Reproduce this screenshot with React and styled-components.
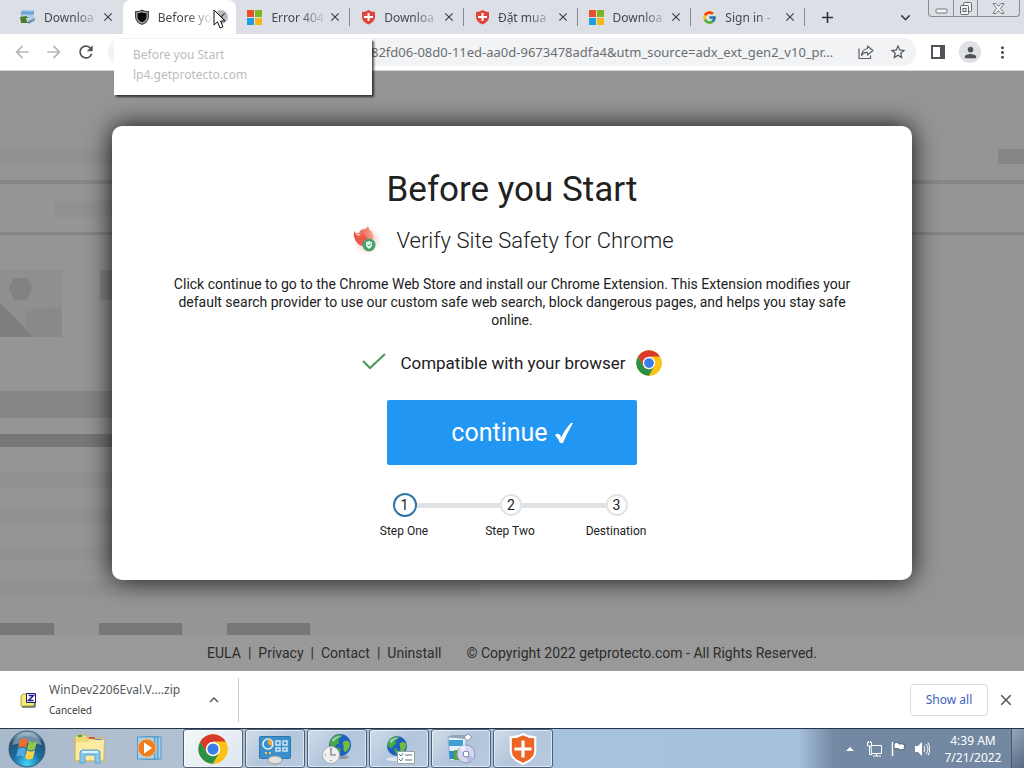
import React from "react";
import styled, { createGlobalStyle, css } from "styled-components";
import {
  MdArrowBack,
  MdArrowForward,
  MdRefresh,
  MdStarBorder,
  MdMoreVert,
  MdPerson,
  MdClose,
  MdAdd,
  MdKeyboardArrowDown,
  MdKeyboardArrowUp,
} from "react-icons/md";
import { FcGoogle } from "react-icons/fc";

const uiFont = `"Noto Sans", "Open Sans", sans-serif`;
const pageFont = `Roboto, "Liberation Sans", sans-serif`;

const Global = createGlobalStyle`
  *, *::before, *::after { box-sizing: border-box; }
  body { margin: 0; font-family: ${uiFont}; }
  button, input { font: inherit; color: inherit; margin: 0; }
  p, h1, h2, ol { margin: 0; padding: 0; }
  svg { display: block; flex: none; }
`;

const Desktop = styled.div`
  display: flex;
  flex-direction: column;
  min-height: 100vh;
  position: relative;
`;

const PlainButton = styled.button`
  display: flex;
  align-items: center;
  justify-content: center;
  padding: 0;
  border: 0;
  background: none;
`;

/* Browser tabs */

const TabStrip = styled.header`
  display: flex;
  align-items: flex-start;
  height: 34px;
  padding-left: 9px;
  background: #dcdfe5;
`;

const Tabs = styled.div`
  display: flex;
  flex: 0 1 796px;
  min-width: 0;
`;

const Tab = styled.div`
  display: flex;
  flex: 1 1 0;
  align-items: center;
  min-width: 0;
  height: 34px;
  padding: 0 8px 0 11px;
  font-size: 12px;
  color: #45494d;
  background: ${(p) => (p.$active ? "#fff" : "transparent")};
  border-radius: 8px 8px 0 0;
  ${(p) =>
    p.$divider &&
    css`
      background: linear-gradient(#85898e, #85898e) right 8px / 1px 18px no-repeat;
    `}
`;

const TabTitle = styled.span`
  flex: 1;
  min-width: 0;
  margin-left: 8px;
  overflow: hidden;
  white-space: nowrap;
  mask-image: linear-gradient(90deg, #000 30px, rgba(0, 0, 0, 0.15) 52px);
`;

const TabClose = styled(PlainButton)`
  width: 14px;
  height: 14px;
  border-radius: 50%;
  color: #3c4043;
  background: ${(p) => (p.$hover ? "#b8bbbf" : "none")};
`;

const NewTab = styled(PlainButton)`
  width: 28px;
  height: 34px;
  margin-left: 8px;
  color: #2f3235;
`;

const WindowTools = styled.div`
  display: flex;
  align-items: flex-start;
  margin-left: auto;
  padding-right: 4px;
`;

const TabSearch = styled(PlainButton)`
  width: 28px;
  height: 34px;
  margin-right: 9px;
  color: #3c4043;
`;

const WindowButtons = styled.div`
  display: flex;
  height: 17px;
  border: 1px solid #888c92;
  border-top: 0;
  border-radius: 0 0 4px 4px;
`;

const WindowButton = styled(PlainButton)`
  width: ${(p) => (p.$wide ? 42 : 24)}px;
  & + & {
    border-left: 1px solid #888c92;
  }
`;

/* Address row */

const Toolbar = styled.nav`
  display: flex;
  align-items: center;
  height: 37px;
  padding: 0 12px 0 8px;
  background: #fff;
  border-bottom: 1px solid #d5d5d5;
`;

const ToolButton = styled(PlainButton)`
  width: 28px;
  height: 28px;
  margin-right: 4px;
  color: ${(p) => (p.$faded ? "#b4b6b8" : "#505357")};
`;

const Omnibox = styled.div`
  display: flex;
  flex: 1;
  align-items: center;
  height: 28px;
  margin: 0 8px 0 4px;
  border-radius: 14px;
  background: #f2f3f4;
`;

const Address = styled.input`
  flex: 1;
  min-width: 0;
  height: 28px;
  padding: 0 0 0 263px;
  border: 0;
  outline: 0;
  background: none;
  font-size: 13px;
  color: #6b6e72;
`;

const Avatar = styled(PlainButton)`
  width: 22px;
  height: 22px;
  margin: 0 12px 0 3px;
  border-radius: 50%;
  background: #dfe1e5;
  color: #505357;
`;

const TabTooltip = styled.div`
  position: absolute;
  left: 114px;
  top: 39px;
  width: 258px;
  height: 56px;
  padding: 6px 19px;
  background: #fff;
  box-shadow: 2px 2px 2px rgba(0, 0, 0, 0.65);
  font-size: 12px;
  line-height: 20px;
  color: #bcbcbc;
`;

const Pointer = styled.svg`
  position: absolute;
  left: 213px;
  top: 9px;
`;

/* Web page */

const Page = styled.div`
  position: relative;
  display: flex;
  flex: 1;
  flex-direction: column;
  align-items: center;
  padding-top: 55px;
  background: #959595;
  font-family: ${pageFont};
  overflow: hidden;
`;

const Backdrop = styled.div`
  position: absolute;
  inset: 0;
  display: flex;
  flex-direction: column;
  align-items: flex-start;
`;

const Strip = styled.div`
  display: flex;
  flex: none;
  justify-content: ${(p) => (p.$split ? "space-between" : "flex-start")};
  width: ${(p) => p.$width || "100%"};
  height: ${(p) => p.$height}px;
  margin-top: ${(p) => p.$gap}px;
  margin-left: ${(p) => p.$indent || 0}px;
  background: ${(p) => p.$color || "none"};
`;

const Block = styled.div`
  width: ${(p) => p.$width}px;
  height: ${(p) => p.$height}px;
  margin-right: ${(p) => p.$after || 0}px;
  background: ${(p) => p.$color};
`;

const Card = styled.main`
  position: relative;
  display: flex;
  flex-direction: column;
  align-items: center;
  width: calc(100% - 224px);
  max-width: 800px;
  padding: 42px 56px 41px;
  border-radius: 10px;
  background: #fff;
  box-shadow: 0 0 26px rgba(0, 0, 0, 0.9);
  color: #212121;
  text-align: center;
`;

const Title = styled.h1`
  font-size: 35px;
  font-weight: 400;
  line-height: 44px;
`;

const SubtitleRow = styled.div`
  display: flex;
  align-items: center;
  gap: 12px;
  height: 36px;
  margin-top: 11px;
`;

const Subtitle = styled.h2`
  font-size: 22px;
  font-weight: 300;
  line-height: 36px;
`;

const Description = styled.p`
  margin-top: 16px;
  font-size: 14px;
  line-height: 18px;
`;

const Compatible = styled.div`
  display: flex;
  align-items: center;
  height: 28px;
  margin-top: 20px;
  font-size: 17px;
`;

const CompatibleText = styled.span`
  margin: 0 10px 0 14px;
`;

const Continue = styled.button`
  display: flex;
  align-items: center;
  justify-content: center;
  gap: 7px;
  width: 250px;
  height: 65px;
  margin-top: 23px;
  border: 0;
  border-radius: 2px;
  background: #2196f3;
  color: #fff;
  font-size: 25px;
`;

const Track = styled.div`
  display: flex;
  align-items: center;
  width: 235px;
  height: 24px;
  margin-top: 28px;
  margin-right: 4px;
`;

const StepDot = styled.span`
  display: flex;
  flex: none;
  align-items: center;
  justify-content: center;
  width: ${(p) => (p.$current ? 24 : 22)}px;
  height: ${(p) => (p.$current ? 24 : 22)}px;
  border: 2px solid ${(p) => (p.$current ? "#2f75a8" : "#e3e3e3")};
  border-radius: 50%;
  font-size: 14px;
`;

const StepLine = styled.span`
  flex: 1;
  height: 5px;
  background: #e0e2e3;
`;

const StepLabels = styled.ol`
  display: grid;
  grid-template-columns: repeat(3, 1fr);
  width: 318px;
  margin-top: 6px;
  margin-right: 4px;
  list-style: none;
  font-size: 12px;
  line-height: 16px;
`;

const Footer = styled.footer`
  position: relative;
  display: flex;
  align-items: center;
  justify-content: center;
  width: 100%;
  height: 36px;
  margin-top: auto;
  background: #999;
  color: #2c2c2c;
  font-size: 14px;
`;

const FooterLink = styled.a`
  color: inherit;
  text-decoration: none;
  & + &::before {
    content: "|";
    margin: 0 7px;
  }
`;

const Copyright = styled.span`
  margin-left: 25px;
`;

/* Download shelf */

const Shelf = styled.section`
  display: flex;
  align-items: center;
  height: 57px;
  padding: 0 10px 0 20px;
  background: #fff;
`;

const FileInfo = styled.div`
  width: 156px;
  margin-left: 13px;
  font-size: 12px;
  line-height: 20px;
  color: #54575b;
  white-space: nowrap;
`;

const FileState = styled.div`
  font-size: 10px;
  color: #3c4043;
`;

const ShelfDivider = styled.div`
  width: 1px;
  height: 44px;
  margin-left: 15px;
  background: #c9cbce;
`;

const ShowAll = styled.button`
  width: 78px;
  height: 32px;
  margin-left: auto;
  padding: 0;
  border: 1px solid #d9dbdf;
  border-radius: 4px;
  background: #fff;
  color: #3c62bd;
  font-size: 12px;
`;

const ShelfClose = styled(PlainButton)`
  width: 16px;
  height: 28px;
  margin-left: 10px;
  color: #505357;
`;

/* Taskbar */

const Taskbar = styled.footer`
  display: flex;
  align-items: stretch;
  height: 40px;
  border-top: 1px solid #253348;
  background: linear-gradient(90deg, #a9b9cc, #b2c0d3 180px, #a7c2df 553px, #a5c1de calc(100% - 226px), #7388a2 calc(100% - 190px), #7287a1);
`;

const StartButton = styled(PlainButton)`
  width: 54px;
`;

const Pinned = styled(PlainButton)`
  width: 60px;
  padding-left: 12px;
`;

const OpenApps = styled.div`
  display: flex;
  gap: 2px;
  margin-left: 9px;
`;

const AppButton = styled(PlainButton)`
  width: 60px;
  border: 1px solid #4e6075;
  border-radius: 3px;
  background: ${(p) =>
    p.$active
      ? "linear-gradient(135deg, #f4f7fa, #dce5f0)"
      : "linear-gradient(135deg, #d2dce8, #b1c5dc 50%, #b8cbe0)"};
  box-shadow: inset 0 0 0 1px rgba(255, 255, 255, 0.55);
`;

const Tray = styled.div`
  display: flex;
  align-items: center;
  gap: 8px;
  margin-left: auto;
  color: #fff;
`;

const TrayExpander = styled(PlainButton)`
  margin-right: 4px;
`;

const Clock = styled.time`
  width: 60px;
  margin-left: 5px;
  font-size: 12px;
  line-height: 17px;
  text-align: center;
`;

const ShowDesktop = styled(PlainButton)`
  align-self: stretch;
  width: 13px;
  border-left: 1px solid #43566d;
  background: linear-gradient(135deg, #96a6b8, #566b83);
`;

/* Icons */

const LandscapeIcon = () => (
  <svg width="16" height="16" viewBox="0 0 16 16">
    <path d="M1 1h13v10H1z" fill="#a9cdea" />
    <path d="M1 3c3-2 8 1 13-1v3C9 7 5 4 1 6z" fill="#6fa3d6" />
    <path d="M0 8l6-1 4 3v4H1z" fill="#4d7d2a" />
    <path d="M6 9h9v4H7z" fill="#c1d6e3" />
    <path d="M8 12l7-3v2l-6 4z" fill="#7194ae" />
  </svg>
);

const ShieldIcon = () => (
  <svg width="16" height="16" viewBox="0 0 16 16">
    <path d="M1 2q4 .3 7-1.500q3 1.800 7 1.500v6q0 5-7 8q-7-3-7-8z" fill="#444" />
    <path d="M2.200 3.200q3 0 5.800-1.300q2.800 1.300 5.800 1.300v5q0 4-5.800 6.500q-5.800-2.500-5.800-6.500z" fill="#aaa" />
    <path d="M3.500 4.300q2.500 0 4.500-1q2 1 4.500 1v4q0 3-4.500 5q-4.500-2-4.500-5z" fill="#050505" />
  </svg>
);

const MicrosoftIcon = () => (
  <svg width="16" height="16" viewBox="0 0 16 16">
    <path d="M0 1h7v7H0z" fill="#e8502a" />
    <path d="M8 1h7v7H8z" fill="#7cb51f" />
    <path d="M0 9h7v7H0z" fill="#1b9fe3" />
    <path d="M8 9h7v7H8z" fill="#f5b71b" />
  </svg>
);

const GuardIcon = ({ size, color }) => (
  <svg width={size} height={size} viewBox="0 0 30 30">
    <path d="M15 0q6 3.500 12.500 3v14q0 8-12.500 13Q2.500 25 2.500 17V3Q9 3.500 15 0z" fill="#fff" />
    <path d="M15 2q5 3 10.500 3v12q0 6.500-10.500 11Q4.500 23.500 4.500 17V5Q10 5 15 2z" fill={color} />
    <path d="M13.500 7h3v6.500H23v3h-6.500V23h-3v-6.500H7v-3h6.500z" fill="#fff" />
  </svg>
);

const GuardFavicon = () => (
  <svg width="15" height="16" viewBox="0 0 15 16">
    <path d="M1 3q3.500 0 6.500-2Q10.500 3 14 3v5q0 5-6.500 7.500Q1 13 1 8z" fill="#e0453b" />
    <path d="M6.500 4h2v3H12v2H8.500v3h-2V9H3V7h3.500z" fill="#fff" />
  </svg>
);

const ChromeIcon = ({ size }) => (
  <svg width={size} height={size} viewBox="0 0 48 48">
    <circle cx="24" cy="24" r="23.500" fill="#fbc116" />
    <path d="M3.650 12.250A23.500 23.500 0 0 1 44.350 12.250H24L13.800 29.900z" fill="#da3a2c" />
    <path d="M3.650 12.250L13.830 29.880A11.750 11.750 0 0 0 34.180 29.880L24 47.500A23.500 23.500 0 0 1 3.650 12.250z" fill="#29904a" />
    <path d="M44.350 12.250H24A11.750 11.750 0 0 1 34.180 29.880L24 47.500A23.500 23.500 0 0 0 44.350 12.250z" fill="#fbc116" />
    <circle cx="24" cy="24" r="11.500" fill="#fff" />
    <circle cx="24" cy="24" r="9" fill="#3c7ee8" />
  </svg>
);

const ShareIcon = () => (
  <svg width="18" height="16" viewBox="0 0 18 16" fill="none" stroke="#5f6368" strokeWidth="1.200">
    <path d="M2 4.500V14.500H13.500V11.500" />
    <path d="M10.500 2L16 6.500L10.500 11V8.500Q6.500 8 4.500 11.500Q5 5.500 10.500 4.500z" strokeLinejoin="round" />
  </svg>
);

const SidePanelIcon = () => (
  <svg width="14" height="14" viewBox="0 0 14 14">
    <path d="M1 1h12v12H1z" fill="none" stroke="#505357" strokeWidth="2" />
    <path d="M9 1h4v12H9z" fill="#505357" />
  </svg>
);

const MinimizeIcon = () => (
  <svg width="13" height="15" viewBox="0 0 13 15">
    <rect x="1" y="8" width="11" height="4" rx="1" fill="#f3f4f5" stroke="#74787d" />
  </svg>
);

const RestoreIcon = () => (
  <svg width="14" height="15" viewBox="0 0 14 15" fill="#f3f4f5" stroke="#65696e">
    <rect x="4.500" y="1.500" width="8" height="9" rx="1" />
    <rect x="1.500" y="4.500" width="8" height="9" rx="1" />
    <rect x="4" y="7.500" width="3" height="3" />
  </svg>
);

const CloseIcon = () => (
  <svg width="13" height="13" viewBox="0 0 13 13">
    <path d="M1 1.500h3l2.500 3 2.500-3h3L8.500 6.500 12 11.500H9l-2.500-3-2.500 3H1l3.500-5z" fill="#f3f4f5" stroke="#74787d" />
  </svg>
);

const FlameIcon = () => (
  <svg width="34" height="36" viewBox="0 0 34 36">
    <defs>
      <radialGradient id="flameGlow">
        <stop offset="0.500" stopColor="#f9c8c6" />
        <stop offset="1" stopColor="#fff" stopOpacity="0" />
      </radialGradient>
      <linearGradient id="flameBody" x1="0" x2="1">
        <stop offset="0" stopColor="#e8483f" />
        <stop offset="1" stopColor="#f7a48c" />
      </linearGradient>
    </defs>
    <circle cx="17" cy="18" r="16" fill="url(#flameGlow)" opacity="0.700" />
    <path d="M4 8q2 3 5 2q1-3 4-4q3 1 5-3q1 4 4 6q3 8-1 13q-8 3-13-1Q3 16 4 8z" fill="url(#flameBody)" />
    <path d="M6 12q4 3 8-2q0 4 4 4l-6 8q-6-2-6-10z" fill="#ea594c" />
    <path d="M4 8q3 5 7 2l-2 3q-3 0-5-5z" fill="#fbc3ae" />
    <circle cx="19" cy="22" r="6.500" fill="#45a46d" />
    <path d="M16 19q2 0 3-1q1 1 3 1v3q0 2-3 4q-3-2-3-4z" fill="#e7f5ec" />
    <path d="M17.500 21.500l1.500 1.500 2-2.500" fill="none" stroke="#45a46d" />
  </svg>
);

const ThinCheck = () => (
  <svg width="24" height="20" viewBox="0 0 24 20">
    <path d="M1 8l7 7L23 1" fill="none" stroke="#4c9657" strokeWidth="2" />
  </svg>
);

const BoldCheck = () => (
  <svg width="18" height="22" viewBox="0 0 18 22">
    <path d="M0 13q2-2 4-1q2 1 2 4Q10 7 16 1h2Q12 11 8 21H5Q3 16 0 13z" fill="#fff" />
  </svg>
);

const PhotoPlaceholder = () => (
  <svg width="62" height="67" viewBox="0 0 62 67">
    <path d="M0 0h62v67H0z" fill="#8f8f8f" />
    <path d="M25 43q10-7 37-5v29H25z" fill="#898989" />
    <path d="M14 8h13l5 10-5 12H14L9 18z" fill="#828282" />
    <path d="M0 34q14 10 32 33H0z" fill="#7e7e7e" />
  </svg>
);

const ZipIcon = () => (
  <svg width="16" height="16" viewBox="0 0 16 16">
    <path d="M1 4l2-2h4l1 2h6v10H1z" fill="#f2ee76" stroke="#a9a52c" />
    <path d="M2 15h13V9" fill="none" stroke="#222" />
    <path d="M6.500 1.500h9v9h-9z" fill="#fff" stroke="#201d80" />
    <path d="M8.500 3.500h5l-5 5h5" fill="none" stroke="#201d80" strokeWidth="1.500" />
  </svg>
);

const StartIcon = () => (
  <svg width="38" height="38" viewBox="0 0 38 38">
    <defs>
      <radialGradient id="orb" cx="0.500" cy="0.900" r="0.900">
        <stop offset="0" stopColor="#3fd3f5" />
        <stop offset="0.450" stopColor="#1b6a9f" />
        <stop offset="0.800" stopColor="#25506f" />
        <stop offset="1" stopColor="#a8c5d9" />
      </radialGradient>
    </defs>
    <circle cx="19" cy="19" r="18" fill="url(#orb)" stroke="#385a78" />
    <path d="M4 15Q8 3 19 3t15 12Q19 10 4 15z" fill="#fff" opacity="0.350" />
    <path d="M12 10q4-3 8 0l-2 8q-4-3-8 0z" fill="#ec6e30" />
    <path d="M21 11q4 3 8 0l-2 8q-4 3-8 0z" fill="#93c643" />
    <path d="M10 19q4-3 8 0l-2 8q-4-3-8 0z" fill="#51a8e2" />
    <path d="M19 20q4 3 8 0l-2 8q-4 3-8 0z" fill="#fbd044" />
  </svg>
);

const FolderIcon = () => (
  <svg width="34" height="32" viewBox="0 0 34 32">
    <path d="M2 4l2-2h9l2 3h16v23H2z" fill="#efd978" stroke="#cdb45b" />
    <path d="M5 2h4v2H5z" fill="#37a34a" />
    <path d="M16 4h6v2h-6z" fill="#d65c41" />
    <path d="M22 6h7v2h-7z" fill="#4c8fd8" />
    <path d="M3 9h12l2-2h14l-1 20H3z" fill="#fbeba0" />
    <path d="M7 30V20q0-3 3-3h14q3 0 3 3v10h-5v-8H12v8z" fill="#86c6ec" stroke="#5ba5d4" />
    <path d="M9 19h16" stroke="#dff4ff" strokeWidth="2" />
  </svg>
);

const PlayerIcon = () => (
  <svg width="28" height="28" viewBox="0 0 28 28">
    <path d="M9 2h16v22H9z" fill="#a9d4ef" stroke="#4e96c4" />
    <path d="M6 2h16v22H6z" fill="#8ac3e8" stroke="#4e96c4" />
    <path d="M1.500 2h17v22h-17z" fill="#a9d5f1" stroke="#4e96c4" />
    <circle cx="11" cy="13" r="9" fill="#ef7d22" stroke="#f8b778" />
    <path d="M8 7.500v11l8-5.500z" fill="#fff" />
  </svg>
);

const PanelIcon = () => (
  <svg width="34" height="32" viewBox="0 0 34 32">
    <rect x="1.500" y="3.500" width="31" height="22" rx="1" fill="#3b8fcb" stroke="#3075ad" />
    <circle cx="10" cy="11" r="5" fill="#3b8fcb" stroke="#e8f5fd" strokeWidth="1.500" />
    <path d="M10 11V6a5 5 0 0 1 4 7z" fill="#f4a933" />
    <path d="M18 8h4v4h-4zM25 8h4v4h-4zM18 15h4v3h-4zM25 15h4v3h-4z" fill="none" stroke="#cfe8f8" strokeWidth="1.500" />
    <path d="M7 20h2M11 20h2" stroke="#f4c95a" strokeWidth="2" />
    <ellipse cx="17" cy="27" rx="7" ry="4" fill="#e2e2df" stroke="#9c9c98" />
  </svg>
);

const Globe = ({ cx, cy, r }) => (
  <g transform={`translate(${cx - r} ${cy - r}) scale(${r / 12})`}>
    <circle cx="12" cy="12" r="12" fill="#1f5fc4" />
    <path d="M3 4q7-5 11-3q-1 4-4 5l1 4q-4 1-5 5q-5-1-5.500-5z" fill="#48a942" />
    <path d="M15 9q5-4 8 1q0 6-5 10q-3-2-2-6z" fill="#6fbf3c" />
    <path d="M9 14l4 2-1 6q-4-2-3-8z" fill="#3aa24a" />
    <path d="M3 6Q8 1 15 2Q8 4 5 9z" fill="#bfe7fa" opacity="0.600" />
  </g>
);

const GlobeClockIcon = () => (
  <svg width="34" height="36" viewBox="0 0 34 36">
    <ellipse cx="22" cy="26" rx="7" ry="2" fill="#8e9ba8" />
    <Globe cx={20} cy={14} r={11} />
    <circle cx="11" cy="24" r="8.500" fill="#eef0f1" stroke="#a8adb2" />
    <path d="M11 17v7h5M11 30v-1M5 24h1" fill="none" stroke="#6c7177" strokeWidth="1.200" />
  </svg>
);

const GlobeListIcon = () => (
  <svg width="34" height="36" viewBox="0 0 34 36">
    <ellipse cx="13" cy="28" rx="9" ry="2" fill="#dde5ec" />
    <Globe cx={15} cy={15} r={10} />
    <path d="M15.500 20.500h17v12h-17z" fill="#fff" stroke="#9aa2aa" />
    <path d="M17 23l2 2 2-3M17 28l2 2 2-3" fill="none" stroke="#2f8a85" />
    <path d="M23 24h7M23 29h7" stroke="#64707c" />
  </svg>
);

const InstallerIcon = () => (
  <svg width="34" height="36" viewBox="0 0 34 36">
    <path d="M4 6h18v24H6z" fill="#e4f0f8" stroke="#92a9ba" />
    <path d="M4 6l4-2h17l-4 4z" fill="#8ea5b8" />
    <path d="M5 9h14v6H5z" fill="#3ba0d4" />
    <path d="M5 20h5v8H6z" fill="#2b8bc3" />
    <path d="M10 19h8v10h-8z" fill="#59a53c" />
    <path d="M20 6l4-3 4 3-5 4z" fill="#fff" stroke="#8d979e" />
    <circle cx="22" cy="23" r="9" fill="#d5d7f0" stroke="#8f93b8" />
    <path d="M22 23L15 17a9 9 0 0 1 6-3z" fill="#f0eef9" />
    <path d="M22 23l8 4a9 9 0 0 1-6 4z" fill="#b4b9e6" />
    <circle cx="22" cy="23" r="3" fill="#fff" stroke="#777cac" />
  </svg>
);

const TrayArrowIcon = () => (
  <svg width="8" height="6" viewBox="0 0 8 6">
    <path d="M0 5l4-4 4 4z" fill="#fff" />
  </svg>
);

const NetworkIcon = () => (
  <svg width="16" height="16" viewBox="0 0 16 16" fill="none" stroke="#fff">
    <path d="M5 4.500h10.500v8H5.500zM7 15h8M10.500 12.500V15" />
    <path d="M1.500 1v4h4V1M3.500 5v8.500H6M2.500 0v2M4.500 0v2" />
  </svg>
);

const FlagIcon = () => (
  <svg width="16" height="16" viewBox="0 0 16 16">
    <path d="M2.500 1v14" stroke="#fff" strokeWidth="1.500" />
    <path d="M4 2q3-1 5 0v1q3-1 6 1q-1 2-1 5-3-1-5 0V8Q6 7 4 8z" fill="#fff" stroke="#4f637b" />
  </svg>
);

const SpeakerIcon = () => (
  <svg width="16" height="16" viewBox="0 0 16 16">
    <path d="M1 5h3l4-4v14l-4-4H1z" fill="#fff" />
    <path d="M10 5q2 3 0 6M12 3q4 5 0 10M14 1.500q3.500 6.500 0 13" fill="none" stroke="#fff" />
  </svg>
);

const tabs = [
  { title: "Downloa", icon: <LandscapeIcon /> },
  { title: "Before yo", icon: <ShieldIcon />, active: true },
  { title: "Error 404", icon: <MicrosoftIcon />, divider: true },
  { title: "Downloa", icon: <GuardFavicon />, divider: true },
  { title: "Đặt mua", icon: <GuardFavicon />, divider: true },
  { title: "Downloa", icon: <MicrosoftIcon />, divider: true },
  { title: "Sign in -", icon: <FcGoogle size={15} />, divider: true },
];

const apps = [
  { name: "Google Chrome", icon: <ChromeIcon size={30} />, active: true },
  { name: "Control Panel", icon: <PanelIcon /> },
  { name: "Internet Time", icon: <GlobeClockIcon /> },
  { name: "Network Tasks", icon: <GlobeListIcon /> },
  { name: "Installer", icon: <InstallerIcon /> },
  { name: "Protecto", icon: <GuardIcon size={32} color="#ec6426" /> },
];

const links = ["EULA", "Privacy", "Contact", "Uninstall"];

export default function App() {
  return (
    <Desktop>
      <Global />
      <TabStrip>
        <Tabs>
          {tabs.map((tab, i) => (
            <Tab key={i} $active={tab.active} $divider={tab.divider}>
              {tab.icon}
              <TabTitle>{tab.title}</TabTitle>
              <TabClose aria-label="Close tab" $hover={tab.active}>
                <MdClose size={14} />
              </TabClose>
            </Tab>
          ))}
        </Tabs>
        <NewTab aria-label="New tab">
          <MdAdd size={19} />
        </NewTab>
        <WindowTools>
          <TabSearch aria-label="Search tabs">
            <MdKeyboardArrowDown size={19} />
          </TabSearch>
          <WindowButtons>
            <WindowButton aria-label="Minimize"><MinimizeIcon /></WindowButton>
            <WindowButton aria-label="Restore"><RestoreIcon /></WindowButton>
            <WindowButton aria-label="Close" $wide><CloseIcon /></WindowButton>
          </WindowButtons>
        </WindowTools>
      </TabStrip>

      <Toolbar>
        <ToolButton aria-label="Back" $faded><MdArrowBack size={20} /></ToolButton>
        <ToolButton aria-label="Forward" $faded><MdArrowForward size={20} /></ToolButton>
        <ToolButton aria-label="Reload"><MdRefresh size={20} /></ToolButton>
        <Omnibox>
          <Address
            aria-label="Address"
            readOnly
            value="82fd06-08d0-11ed-aa0d-9673478adfa4&utm_source=adx_ext_gen2_v10_pr..."
          />
          <ToolButton aria-label="Share"><ShareIcon /></ToolButton>
          <ToolButton aria-label="Bookmark"><MdStarBorder size={18} /></ToolButton>
        </Omnibox>
        <ToolButton aria-label="Side panel"><SidePanelIcon /></ToolButton>
        <Avatar aria-label="Profile"><MdPerson size={17} /></Avatar>
        <PlainButton aria-label="Menu"><MdMoreVert size={19} color="#505357" /></PlainButton>
      </Toolbar>

      <Page>
        <Backdrop aria-hidden="true">
          <Strip $gap={78} $height={15} $split>
            <Block $width={480} $height={15} $color="#919191" />
            <Block $width={26} $height={15} $color="#868686" />
          </Strip>
          <Strip $gap={16} $height={4} $color="#868686" />
          <Strip $gap={17} $height={16} $indent={55} $width="300px" $color="#909090" />
          <Strip $gap={15} $height={3} $color="#848484" />
          <Strip $gap={35} $height={67}>
            <PhotoPlaceholder />
            <Block $width={38} $height={67} />
            <Block $width={200} $height={30} $color="#878787" />
          </Strip>
          <Strip $gap={54} $height={27} $width="480px" $color="#868686" />
          <Strip $gap={16} $height={13} $width="480px" $color="#777" />
          <Strip $gap={25} $height={16} $width="480px" $color="#909090" />
          <Strip $gap={20} $height={16} $width="480px" $color="#909090" />
          <Strip $gap={22} $height={14} $width="480px" $color="#929292" />
          <Strip $gap={22} $height={15} $width="480px" $color="#919191" />
          <Strip $gap={26} $height={12}>
            <Block $width={54} $height={12} $after={45} $color="#777" />
            <Block $width={83} $height={12} $after={45} $color="#777" />
            <Block $width={83} $height={12} $color="#777" />
          </Strip>
        </Backdrop>

        <Card>
          <Title>Before you Start</Title>
          <SubtitleRow>
            <FlameIcon />
            <Subtitle>Verify Site Safety for Chrome</Subtitle>
          </SubtitleRow>
          <Description>
            Click continue to go to the Chrome Web Store and install our Chrome Extension. This
            Extension modifies your default search provider to use our custom safe web search,
            block dangerous pages, and helps you stay safe online.
          </Description>
          <Compatible>
            <ThinCheck />
            <CompatibleText>Compatible with your browser</CompatibleText>
            <ChromeIcon size={26} />
          </Compatible>
          <Continue>
            continue
            <BoldCheck />
          </Continue>
          <Track>
            <StepDot $current>1</StepDot>
            <StepLine />
            <StepDot>2</StepDot>
            <StepLine />
            <StepDot>3</StepDot>
          </Track>
          <StepLabels>
            <li>Step One</li>
            <li>Step Two</li>
            <li>Destination</li>
          </StepLabels>
        </Card>

        <Footer>
          {links.map((name) => (
            <FooterLink key={name} href="#">{name}</FooterLink>
          ))}
          <Copyright>© Copyright 2022 getprotecto.com - All Rights Reserved.</Copyright>
        </Footer>
      </Page>

      <Shelf>
        <ZipIcon />
        <FileInfo>
          WinDev2206Eval.V....zip
          <FileState>Canceled</FileState>
        </FileInfo>
        <PlainButton aria-label="Download options">
          <MdKeyboardArrowUp size={18} color="#505357" />
        </PlainButton>
        <ShelfDivider />
        <ShowAll>Show all</ShowAll>
        <ShelfClose aria-label="Close downloads"><MdClose size={18} /></ShelfClose>
      </Shelf>

      <Taskbar>
        <StartButton aria-label="Start"><StartIcon /></StartButton>
        <Pinned aria-label="Explorer"><FolderIcon /></Pinned>
        <Pinned aria-label="Media Player"><PlayerIcon /></Pinned>
        <OpenApps>
          {apps.map((app) => (
            <AppButton key={app.name} aria-label={app.name} $active={app.active}>
              {app.icon}
            </AppButton>
          ))}
        </OpenApps>
        <Tray>
          <TrayExpander aria-label="Hidden icons"><TrayArrowIcon /></TrayExpander>
          <NetworkIcon />
          <FlagIcon />
          <SpeakerIcon />
          <Clock>
            4:39 AM
            <br />
            7/21/2022
          </Clock>
          <ShowDesktop aria-label="Show desktop" />
        </Tray>
      </Taskbar>

      <TabTooltip role="tooltip">
        <div>Before you Start</div>
        <div>lp4.getprotecto.com</div>
      </TabTooltip>
      <Pointer width="14" height="21" viewBox="0 0 14 21">
        <path d="M1 1v15l3.500-3.200L7 19l3-1.200-2.500-5.800H12z" fill="#fff" stroke="#111" />
      </Pointer>
    </Desktop>
  );
}
